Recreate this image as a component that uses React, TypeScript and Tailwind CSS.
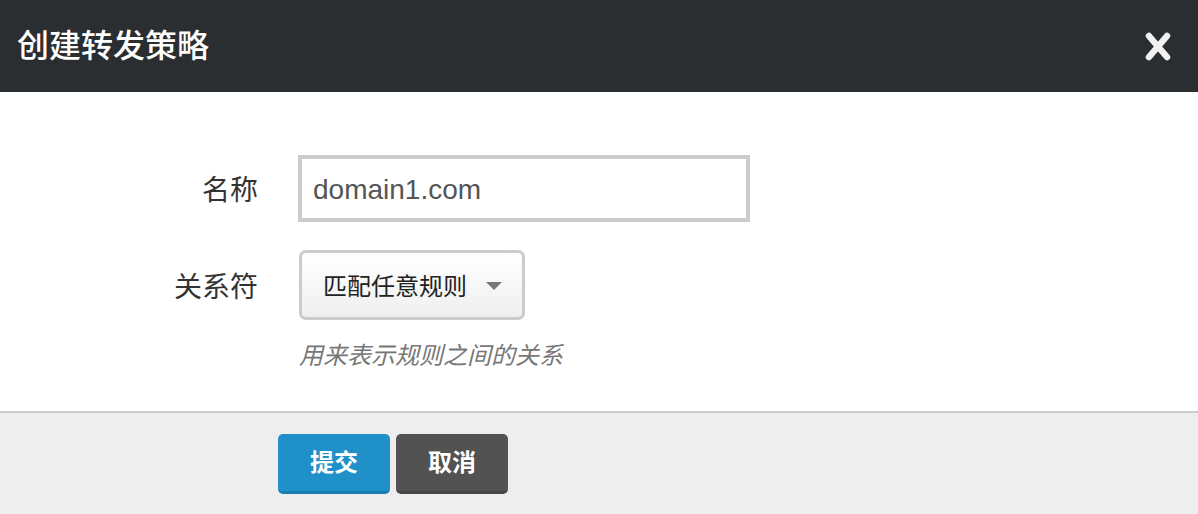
import React from "react";

const cjk = '"Liberation Sans", "Noto Sans CJK SC", sans-serif';

export default function App() {
  return (
    <div className="w-[1198px] h-[514px] flex flex-col bg-white" style={{ fontFamily: cjk }}>
      <div className="h-[92px] bg-[#2b2e30] flex items-center justify-between pl-[17px] pr-[26px]">
        <div className="text-[32px] text-white leading-none font-medium">创建转发策略</div>
        <svg width="28" height="31" viewBox="0 0 28 31">
          <line x1="5" y1="5" x2="23" y2="26" stroke="#f2f2f2" strokeWidth="6.5" strokeLinecap="round" />
          <line x1="23" y1="5" x2="5" y2="26" stroke="#f2f2f2" strokeWidth="6.5" strokeLinecap="round" />
        </svg>
      </div>
      <div className="h-[319px] pt-[63px] flex flex-col">
        <div className="flex items-center">
          <div className="w-[258px] text-right text-[28px] text-[#333] leading-none pt-[5px]">名称</div>
          <div className="ml-[40px] w-[452px] h-[67px] border-4 border-[#cccccc] bg-white flex items-center pl-[11px] pt-[3px] text-[28px] text-[#555]">
            domain1.com
          </div>
        </div>
        <div className="flex items-center mt-[28px]">
          <div className="w-[258px] text-right text-[28px] text-[#333] leading-none pt-[5px]">关系符</div>
          <div className="ml-[41px] w-[226px] h-[70px] border-[3px] border-[#cccccc] rounded-[7px] bg-gradient-to-b from-white to-[#efefef] flex items-center pl-[21px] pr-[20px] justify-between">
            <span className="text-[24px] text-[#222] leading-none pt-[4px]">匹配任意规则</span>
            <svg width="16" height="8" viewBox="0 0 16 8" className="mt-[2px]">
              <polygon points="0,0 16,0 8,8" fill="#777" />
            </svg>
          </div>
        </div>
        <div className="ml-[299px] mt-[21px] text-[24px] italic text-[#777] leading-[30px]">用来表示规则之间的关系</div>
      </div>
      <div className="flex-1 bg-[#eeeeee] border-t-2 border-[#cccccc] pt-[21px] pl-[278px] flex items-start gap-[6px]">
        <button className="w-[112px] h-[60px] rounded-[5px] bg-[#2090c8] border-b-[3px] border-[#1a7db0] text-white text-[24px] font-bold">提交</button>
        <button className="w-[112px] h-[60px] rounded-[5px] bg-[#525252] border-b-[3px] border-[#474747] text-white text-[24px] font-bold">取消</button>
      </div>
    </div>
  );
}
